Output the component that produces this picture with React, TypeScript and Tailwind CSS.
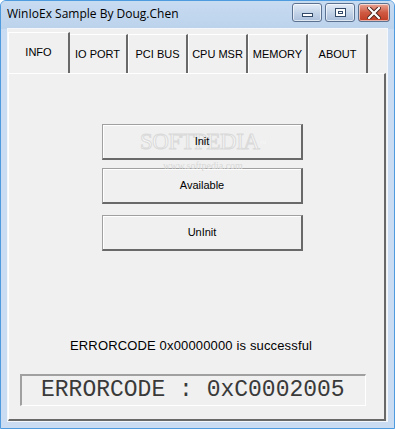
import React, { useState } from 'react';

const tabs = ['INFO', 'IO PORT', 'PCI BUS', 'CPU MSR', 'MEMORY', 'ABOUT'];

function CaptionButton({ kind }: { kind: 'min' | 'max' | 'close' }) {
  const isClose = kind === 'close';
  return (
    <div
      className={
        'flex h-[19px] items-center justify-center rounded-[3px] border border-[#5c7291] shadow-[inset_0_0_0_1px_rgba(255,255,255,0.6)] ' +
        (isClose
          ? 'w-[32px] bg-gradient-to-b from-[#e8a596] via-[#cf5a43] to-[#c23b22]'
          : 'w-[30px] bg-gradient-to-b from-[#e3ecf7] via-[#c4d4e8] to-[#aabfdb]')
      }
    >
      {kind === 'min' && <div className="mt-[5px] h-[4px] w-[11px] border border-[#334a68] bg-white" />}
      {kind === 'max' && (
        <div className="flex h-[9px] w-[11px] items-center justify-center border border-[#334a68] bg-white">
          <div className="h-[3px] w-[5px] border border-[#334a68]" />
        </div>
      )}
      {kind === 'close' && (
        <svg width="14" height="12" viewBox="0 0 14 12">
          <path d="M2 1 L12 11 M12 1 L2 11" stroke="#4a2018" strokeWidth="4" strokeLinecap="square" />
          <path d="M2 1 L12 11 M12 1 L2 11" stroke="#ffffff" strokeWidth="2.2" strokeLinecap="square" />
        </svg>
      )}
    </div>
  );
}

function ClassicButton({ label }: { label: string }) {
  return (
    <button
      type="button"
      className="flex h-[36px] w-[201px] items-center justify-center border border-[#a0a0a0] border-b-2 border-r-2 border-b-[#696969] border-r-[#696969] bg-[#f0f0f0] text-[11px] text-black shadow-[inset_1px_1px_0_#ffffff]"
    >
      <span className="relative z-10">{label}</span>
    </button>
  );
}

export default function App() {
  const [active, setActive] = useState(0);

  return (
    <div
      className="flex h-[429px] w-[395px] flex-col overflow-hidden rounded-t-[6px] border border-[#4f9be0] bg-[#c9dcf1]"
      style={{ fontFamily: '"Liberation Sans", Arial, sans-serif' }}
    >
      {/* title bar */}
      <div className="flex h-[28px] shrink-0 items-start justify-between bg-gradient-to-b from-[#c7dbf1] to-[#bcd3ec] pl-[6px] pr-[4px]">
        <div className="pt-[4px] text-[12px] text-black" style={{ fontFamily: '"Open Sans", "Noto Sans", sans-serif' }}>
          WinIoEx Sample By Doug.Chen
        </div>
        <div className="flex gap-[3px] pt-[2px]">
          <CaptionButton kind="min" />
          <CaptionButton kind="max" />
          <CaptionButton kind="close" />
        </div>
      </div>

      {/* client area */}
      <div className="mx-[7px] mb-[7px] flex flex-1 flex-col bg-[#f0f0f0] pt-[3px] shadow-[0_0_0_1px_#f4f8fc]">
        {/* tab strip */}
        <div className="flex h-[41px] items-end">
          {tabs.map((t, i) => {
            const sel = i === active;
            return (
              <div
                key={t}
                onClick={() => setActive(i)}
                className={
                  'relative flex cursor-default items-center justify-center border-l border-t border-r-2 border-l-[#ffffff] border-t-[#ffffff] border-r-[#696969] bg-[#f0f0f0] text-[11px] text-black ' +
                  (sel ? 'z-10 -mr-[2px] h-[41px] w-[62px] pb-[2px]' : 'h-[39px] w-[60px] pt-[1px]')
                }
              >
                {t}
              </div>
            );
          })}
        </div>

        {/* panel */}
        <div className="relative mr-[1px] flex flex-1 flex-col items-start border-l border-t border-r-2 border-b-2 border-l-white border-t-white border-r-[#696969] border-b-[#696969]">
          <div className="ml-[93px] mt-[50px] flex flex-col gap-[8px]">
            <ClassicButton label="Init" />
            <ClassicButton label="Available" />
          </div>
          <div className="ml-[93px] mt-[11px]">
            <ClassicButton label="UnInit" />
          </div>

          <div className="ml-[61px] mt-[85px] text-[13px] tracking-[0.15px] text-black">
            ERRORCODE 0x00000000 is successful
          </div>

          <div
            className="ml-[11px] mt-[18px] flex h-[32px] w-[346px] items-center border-l-2 border-t-2 border-r border-b border-l-[#a0a0a0] border-t-[#a0a0a0] border-r-white border-b-white pl-[19px] text-[23px] leading-none text-[#3a3a3a]"
            style={{ fontFamily: '"Liberation Mono", "Courier New", monospace' }}
          >
            ERRORCODE : 0xC0002005
          </div>

          {/* watermark */}
          <div className="pointer-events-none absolute left-[131px] top-[56px] flex flex-col items-center">
            <div
              className="text-[23px] leading-none tracking-[-0.5px] text-white/50 [-webkit-text-stroke:1px_#dadada]"
              style={{ fontFamily: '"Liberation Serif", serif' }}
            >
              SOFTPEDIA<sup className="text-[7px] [-webkit-text-stroke:0]">™</sup>
            </div>
            <div className="mt-[8px] text-[10px] leading-none text-[#d8d8d8]" style={{ fontFamily: '"Liberation Serif", serif' }}>
              www.softpedia.com
            </div>
          </div>
        </div>
      </div>
    </div>
  );
}
